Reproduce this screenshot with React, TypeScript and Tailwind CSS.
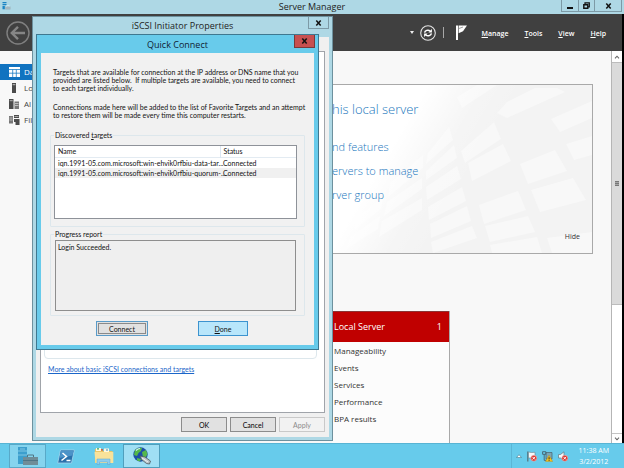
import type { ReactNode } from "react";

const SANS = "font-['Open_Sans','Noto_Sans',sans-serif]";
const DIALOG = "font-[Lato,'Liberation_Sans',sans-serif]";

/* ---------- icons ---------- */

function ServerLogo() {
  return (
    <svg viewBox="0 0 26 24" className="h-2 w-[9px]" aria-hidden="true">
      <path d="M1 0h12v4H1zM1 6h12v4H1zM1 12h7v10H1z" fill="#1b84c4" />
      <path d="M9 14h16v8H9z" fill="#8aa3ad" />
      <path d="M13 14v-3h8v3M9 18h16" fill="none" stroke="#f2f8fa" strokeWidth="1.5" />
    </svg>
  );
}

function BackIcon() {
  return (
    <svg viewBox="0 0 24 24" className="size-6" aria-hidden="true">
      <circle cx="12" cy="12" r="11" fill="none" stroke="#808080" strokeWidth="1.4" />
      <path d="M19 12H6.5M12 5.8 5.8 12l6.200 6.200" fill="none" stroke="#858585" strokeWidth="2.400" />
    </svg>
  );
}

function RefreshIcon() {
  return (
    <svg viewBox="0 0 16 16" className="size-4" aria-hidden="true">
      <circle cx="8" cy="8" r="7.300" fill="none" stroke="#e4e4e4" strokeWidth="1.100" />
      <path d="M4.600 7.600C5 5.500 8 4.300 10.200 6M11.400 8.400C11 10.500 8 11.700 5.800 10" fill="none" stroke="#fff" strokeWidth="1.500" />
      <path d="M11.900 4v3.600H8.400zM4.100 12V8.400h3.500z" fill="#fff" />
    </svg>
  );
}

function FlagIcon() {
  return (
    <svg viewBox="0 0 11 15" className="h-[15px] w-[11px]" aria-hidden="true">
      <path d="M0 .5h2V15H0z" fill="#fff" />
      <path d="M2.600 .5H11L7 6.200l-4.400 2z" fill="#fff" />
      <path d="M3 3.500l4-1.500" stroke="#777" strokeWidth=".7" />
    </svg>
  );
}

function DashboardIcon() {
  return (
    <svg viewBox="0 0 11 10" className="h-[10px] w-[11px]" aria-hidden="true">
      <path d="M0 0h11v10H0z" fill="#fff" />
      <path d="M0 2.500h11M3.700 2.500V10M7.300 2.500V10M0 6.200h11" stroke="#1a7cc4" strokeWidth=".8" />
    </svg>
  );
}

function LocalServerIcon() {
  return (
    <svg viewBox="0 0 11 10" className="h-[10px] w-[11px]" aria-hidden="true">
      <path d="M3 0h4v10H3z" fill="#4b4b4b" />
      <path d="M3.600 1.700h2.800" stroke="#ddd" strokeWidth=".8" />
    </svg>
  );
}

function AllServersIcon() {
  return (
    <svg viewBox="0 0 11 10" className="h-[10px] w-[11px]" aria-hidden="true">
      <path d="M0 0h4.500v10H0z" fill="#4b4b4b" />
      <path d="M5.500 2.500H10V10H5.500z" fill="#777" />
      <path d="M.7 1.700h3M6 4.500h3.500M6 6.500h3.500" stroke="#ddd" strokeWidth=".7" />
    </svg>
  );
}

function FileIcon() {
  return (
    <svg viewBox="0 0 11 10" className="h-[10px] w-[11px]" aria-hidden="true">
      <path d="M0 1h4v7.500H0z" fill="#777" />
      <path d="M5 0h5v3H5zM5 4h5.500v6H6.500V7H5z" fill="#4b4b4b" />
      <path d="M.5 3h3M.5 5h3M5.500 1.500h4" stroke="#e4e4e4" strokeWidth=".6" />
    </svg>
  );
}

function ServerTaskIcon() {
  return (
    <svg viewBox="0 0 22 20" className="h-5 w-[22px]" aria-hidden="true">
      <path d="M1 1h9v17H1z" fill="#3c9fcd" />
      <path d="M1 5h9M1 9h9M3 3h5" stroke="#7ec7e4" strokeWidth="1" />
      <path d="M6 11h15v8H6z" fill="#6f8d98" />
      <path d="M10.500 11V9h6v2M6 14.500h15" fill="none" stroke="#4f7484" strokeWidth="1" />
    </svg>
  );
}

function PowerShellIcon() {
  return (
    <svg viewBox="0 0 18 15" className="h-[15px] w-[18px]" aria-hidden="true">
      <path d="M3.500 1h13.800l-2.800 13H.7z" fill="#2a70ab" stroke="#a6d6ee" strokeWidth=".8" />
      <path d="M4 1.500h12.600l-1.100 5L2.500 9z" fill="#4c93c8" />
      <path d="M5.500 4l4 3.500-5 4M9.500 11.500h4" fill="none" stroke="#fff" strokeWidth="1.500" />
    </svg>
  );
}

function FolderIcon() {
  return (
    <svg viewBox="0 0 20 18" className="h-[18px] w-5" aria-hidden="true">
      <path d="M1 2h7l1 2h9.500v12H1z" fill="#e9c766" />
      <path d="M2 1h5v3H2zM10 1.500h5V5h-5z" fill="#fff8df" />
      <path d="M3 1.300h2v1.200H3z" fill="#3da35d" />
      <path d="M7 2.300h2v1.200H7z" fill="#d2452f" />
      <path d="M12 2.500h2v1h-2z" fill="#3b88c6" />
      <path d="M.5 5h18.800v11H1.500z" fill="#f8e29a" />
      <path d="M3 17.500v-5.500h13v5.500h-2.500V15h-8v2.500z" fill="#8fcdee" stroke="#5aa5d0" strokeWidth=".5" />
    </svg>
  );
}

function GlobeIcon() {
  return (
    <svg viewBox="0 0 20 18" className="h-[18px] w-5" aria-hidden="true">
      <circle cx="8.500" cy="7.500" r="7.200" fill="#1c4fa8" />
      <path d="M3 3c2-2 5-2.500 7-2L9 4 6.500 6 5 9 2 8zM10 5l4-2 1.500 4-2 4-2.500-1zM5 11l4 1-1 2.500-3-1z" fill="#55b84a" />
      <path d="M4 3.500c1.500-1.500 3-2 4-2" stroke="#cdeeff" strokeWidth="1.200" fill="none" />
      <path d="M8 9l5 1 5.500 4-1 3-3-.5-5-4z" fill="#b8c2c7" stroke="#4d5960" strokeWidth=".8" />
      <path d="M10 11l6 4" stroke="#f4f4f4" strokeWidth="1" />
    </svg>
  );
}

function ErrorBadge({ cx, cy }: { cx: number; cy: number }) {
  return (
    <g>
      <circle cx={cx} cy={cy} r="3" fill="#dc3a34" stroke="#f5c9c5" strokeWidth=".5" />
      <path d={`M${cx - 1.3} ${cy - 1.3}l2.600 2.600m0-2.600l-2.600 2.600`} stroke="#fff" strokeWidth=".9" />
    </g>
  );
}

function ActionCenterIcon() {
  return (
    <svg viewBox="0 0 10 11" className="h-[11px] w-[10px]" aria-hidden="true">
      <path d="M.8 .5v10" stroke="#54707b" strokeWidth="1.200" />
      <path d="M1.500 1l3 .5 3.500-.2V7H1.500z" fill="#f4f8fa" stroke="#67808b" strokeWidth=".6" />
      <ErrorBadge cx={6.8} cy={7.2} />
    </svg>
  );
}

function NetworkIcon() {
  return (
    <svg viewBox="0 0 11 11" className="size-[11px]" aria-hidden="true">
      <path d="M4 1.500h6V8H4z" fill="#7ba6b7" stroke="#46606b" strokeWidth=".7" />
      <path d="M.6 .7h3.200v2.600H.6zM2.200 3.300v6h3" fill="none" stroke="#46606b" strokeWidth=".9" />
      <path d="M7 4.200l3.800 6.300H3.500z" fill="#f5bf1f" stroke="#a67a00" strokeWidth=".3" />
      <path d="M7.100 6.200v2.200M7.100 9v.8" stroke="#222" strokeWidth=".9" />
    </svg>
  );
}

function VolumeIcon() {
  return (
    <svg viewBox="0 0 10 11" className="h-[11px] w-[10px]" aria-hidden="true">
      <path d="M.5 3.500h2L6 .8v9L2.500 7h-2z" fill="#f4f8fa" stroke="#5e7883" strokeWidth=".7" />
      <ErrorBadge cx={6.8} cy={7.2} />
    </svg>
  );
}

function CloseGlyph() {
  return (
    <svg viewBox="0 0 7 6" className="h-[6px] w-[7px]" aria-hidden="true">
      <path d="M1.300 .5l4.400 5M5.700 .5l-4.400 5" stroke="#111" strokeWidth="1.500" />
    </svg>
  );
}

function Facade() {
  return (
    <svg
      viewBox="0 0 260 168"
      preserveAspectRatio="xMaxYMax slice"
      className="absolute right-0 top-0 h-full w-[260px]"
      aria-hidden="true"
    >
      <defs>
        <linearGradient id="facade-fade" gradientUnits="userSpaceOnUse" x1="20" y1="20" x2="140" y2="90">
          <stop offset=".4" stopColor="#fff" />
          <stop offset=".75" stopColor="#fff" stopOpacity=".2" />
          <stop offset="1" stopColor="#fff" stopOpacity="0" />
        </linearGradient>
      </defs>
      <path d="M0 0h260v168H0z" fill="#f3f3f3" />
      <g fill="#f8f8f8" transform="translate(50 0)">
        <path d="M46 68 67 42l4 13-27 24z" />
        <path d="M44 86 72 60l3 13-31 22z" />
        <path d="M44 102l31-21 4 13-34 21z" />
        <path d="M46 122l34-20 4 14-37 19z" />
        <path d="M48 139l37-18 4 15-40 17z" />
        <path d="M49 157l41-16 5 12-44 15z" />
        <path d="M79 66l33-29 7 17-36 24z" />
        <path d="M86 78l35-19 8 17-39 20z" />
        <path d="M97 120l39-14 8 19-42 14z" />
        <path d="M103 141l43-10 7 16-45 10z" />
        <path d="M108 160l47-8 5 16h-50z" />
        <path d="M138 79l35-14 12 21-39 13z" />
        <path d="M149 105l42-12 13 22-46 12z" />
        <path d="M125 17l28-14h22l8 4-58 26-10-5z" />
        <path d="M169 34l41-18v17l-32 14z" />
        <path d="M184 59l26-8v19l-18 5z" />
        <path d="M75 12l20-12h20L80 23z" />
        <path d="M165 153l45-6v21h-40z" />
        <path d="M8 98 41 70v13L6 112z" />
        <path d="M5 117l35-24v11L2 131z" />
        <path d="M0 136l40-23v12L-3 152z" />
        <path d="M-26 133l28-22-3 13-27 21z" />
        <path d="M-32 152l30-21-2 13-32 20z" />
      </g>
      <path d="M0 0h260v168H0z" fill="url(#facade-fade)" />
    </svg>
  );
}

/* ---------- server manager ---------- */

function WindowButton({ label, className, children }: { label: string; className: string; children: ReactNode }) {
  return (
    <button
      type="button"
      aria-label={label}
      className={`flex h-3 items-center justify-center border border-t-0 border-[#7d9aa6] ${className}`}
    >
      {children}
    </button>
  );
}

function ManagerTitleBar() {
  return (
    <header className="relative flex h-[14px] shrink-0 items-start justify-between bg-[#aed8e5]">
      <div className="pt-[2px] pl-[2px]">
        <ServerLogo />
      </div>
      <h1 className="absolute inset-x-0 text-center text-[9px] leading-[14px] text-[#222]">Server Manager</h1>
      <div className="relative flex pr-[2px]">
        <WindowButton label="Minimize" className="w-[18px]">
          <span className="mt-1 h-[2px] w-[6px] bg-[#111]" />
        </WindowButton>
        <WindowButton label="Restore" className="w-4 border-l-0">
          <svg viewBox="0 0 7 7" className="size-[7px]" aria-hidden="true">
            <path d="M2 2V.8h4.300v4H5" fill="none" stroke="#111" strokeWidth="1.200" />
            <path d="M.8 2.800h4v3.400h-4z" fill="none" stroke="#111" strokeWidth="1.400" />
          </svg>
        </WindowButton>
        <WindowButton label="Close" className="w-[27px] border-l-0">
          <CloseGlyph />
        </WindowButton>
      </div>
    </header>
  );
}

const MENUS = ["Manage", "Tools", "View", "Help"];

function CommandBar() {
  return (
    <div className="flex h-[37px] shrink-0 items-center justify-between bg-[#404040] pr-4 pl-[6px] text-white">
      <button type="button" aria-label="Back">
        <BackIcon />
      </button>
      <div className="flex items-center">
        <button type="button" aria-label="Breadcrumb history" className="mr-[6px]">
          <svg viewBox="0 0 4 3" className="h-[3px] w-1" aria-hidden="true">
            <path d="M0 0h4L2 3z" fill="#eee" />
          </svg>
        </button>
        <button type="button" aria-label="Refresh">
          <RefreshIcon />
        </button>
        <span className="ml-[7px] h-[11px] w-px bg-[#a8a8a8]" />
        <button type="button" aria-label="Notifications" className="mr-[15px] ml-3">
          <FlagIcon />
        </button>
        <nav className="flex gap-4 pt-[2px] text-[7px] leading-[10px] font-semibold">
          {MENUS.map((menu) => (
            <button key={menu} type="button">
              <u>{menu[0]}</u>
              {menu.slice(1)}
            </button>
          ))}
        </nav>
      </div>
    </div>
  );
}

const SIDE_ITEMS = [
  { text: "Da", icon: <DashboardIcon />, active: true },
  { text: "Lo", icon: <LocalServerIcon />, active: false },
  { text: "Al", icon: <AllServersIcon />, active: false },
  { text: "Fil", icon: <FileIcon />, active: false },
];

function SideBar() {
  return (
    <nav className="w-9 shrink-0 bg-[#f8f8f8] pt-[13px]">
      {SIDE_ITEMS.map((item) => (
        <a
          key={item.text}
          href="#"
          className={`flex h-4 items-center gap-1 pl-[9px] text-[8px] leading-4 ${
            item.active ? "bg-[#1173c0] text-white" : "text-[#444]"
          }`}
        >
          <span className="shrink-0">{item.icon}</span>
          {item.text}
        </a>
      ))}
    </nav>
  );
}

const LINKS = ["nd features", "ervers to manage", "rver group"];
const TILE_ROWS = ["Manageability", "Events", "Services", "Performance", "BPA results"];

function Dashboard() {
  return (
    <main className="flex min-w-0 flex-1 flex-col bg-[#f8f8f8] pt-[33px] pr-[18px] pl-[296px]">
      <section className="relative h-[170px] shrink-0 border border-l-0 border-[#a9a9a9] bg-white">
        <Facade />
        <div className="relative flex h-full flex-col items-start text-[#2277bd]">
          <h2 className="mt-[14px] text-[13px] leading-5 font-light">his local server</h2>
          <ul className="mt-4 text-[11px] leading-6 font-light">
            {LINKS.map((link) => (
              <li key={link}>
                <a href="#">{link}</a>
              </li>
            ))}
          </ul>
          <button type="button" className="mt-auto mr-3 mb-[11px] self-end text-[7px] leading-[10px] text-[#333]">
            Hide
          </button>
        </div>
      </section>
      <section className="mt-[57px] flex w-[118px] flex-1 flex-col border-r border-[#a9a9a9] bg-[#fcfcfc]">
        <h3 className="flex h-[31px] items-center justify-between border-t border-[#8a3434] bg-[#c00000] pr-[7px] pl-[2px] text-[9px] text-white">
          <span>Local Server</span>
          <span>1</span>
        </h3>
        <ul className="pl-[2px] text-[8px] leading-[17px] text-[#333]">
          {TILE_ROWS.map((row) => (
            <li key={row}>{row}</li>
          ))}
        </ul>
      </section>
    </main>
  );
}

function ScrollBar() {
  return (
    <div className="flex w-[11px] shrink-0 flex-col border-l border-[#b5b5b5] bg-white">
      <button type="button" aria-label="Scroll up" className="flex h-[11px] items-center justify-center">
        <svg viewBox="0 0 6 4" className="h-1 w-[6px]" aria-hidden="true">
          <path d="M1 3.300 3 1.200l2 2.100" fill="none" stroke="#666" strokeWidth="1.100" />
        </svg>
      </button>
      <div className="flex flex-[242] items-center justify-center border-y border-[#bcbcbc] bg-[#dadada]">
        <span className="flex h-[5px] w-1 flex-col justify-between bg-[#a5a5a5]">
          <i className="h-px bg-[#777]" />
          <i className="h-px bg-[#777]" />
          <i className="h-px bg-[#777]" />
        </span>
      </div>
      <div className="flex-[129]" />
      <button
        type="button"
        aria-label="Scroll down"
        className="flex h-[10px] items-center justify-center border-t border-[#c4c4c4]"
      >
        <svg viewBox="0 0 6 4" className="h-1 w-[6px]" aria-hidden="true">
          <path d="M1 .7l2 2.100L5 .7" fill="none" stroke="#666" strokeWidth="1.100" />
        </svg>
      </button>
    </div>
  );
}

/* ---------- dialogs ---------- */

function Mnemonic({ text, at = 0 }: { text: string; at?: number }) {
  return (
    <span>
      {text.slice(0, at)}
      <u>{text[at]}</u>
      {text.slice(at + 1)}
    </span>
  );
}

function GroupBox({ legend, className, children }: { legend: ReactNode; className: string; children: ReactNode }) {
  return (
    <fieldset className={`mx-[9px] rounded-[1px] border border-[#dde7ec] px-[3px] ${className}`}>
      <legend className="px-px leading-[10px]">{legend}</legend>
      {children}
    </fieldset>
  );
}

const DIALOG_BUTTON = "flex h-[15px] items-center justify-center border leading-[10px]";

function PropertiesWindow() {
  return (
    <section
      aria-label="iSCSI Initiator Properties"
      className={`absolute top-4 left-8 flex h-[425px] w-[301px] flex-col border border-[#6d919e] bg-[#aed8e5] px-[3px] pb-[3px] text-[7px] ${DIALOG}`}
    >
      <header className="relative flex h-5 shrink-0 justify-end">
        <h2 className={`absolute inset-x-0 text-center text-[9px] leading-[17px] text-[#222] ${SANS}`}>
          iSCSI Initiator Properties
        </h2>
        <button
          type="button"
          aria-label="Close properties"
          className="relative flex h-3 w-[21px] items-center justify-center border border-t-0 border-[#7d9aa6]"
        >
          <CloseGlyph />
        </button>
      </header>
      <div className="flex flex-1 flex-col bg-[#f0f0f0] px-1 pt-[14px]">
        <div className="flex flex-1 flex-col border border-[#a0a4aa] bg-white px-[3px]">
          <div className="mr-1 h-[307px] rounded-sm border border-[#dde7ec]" />
          <a href="#" className="mt-[5px] self-start pl-1 leading-[10px] text-[#1b66c9] underline">
            More about basic iSCSI connections and targets
          </a>
        </div>
        <div className="flex justify-end gap-[3px] pt-1 pb-[5px]">
          <button type="button" className={`${DIALOG_BUTTON} w-[46px] border-[#8c8c8c] bg-[#e1e1e1]`}>
            OK
          </button>
          <button type="button" className={`${DIALOG_BUTTON} w-[46px] border-[#8c8c8c] bg-[#e1e1e1]`}>
            Cancel
          </button>
          <button type="button" disabled className={`${DIALOG_BUTTON} w-[46px] border-[#c9c9c9] bg-[#f2f2f2] text-[#8c8c8c]`}>
            Apply
          </button>
        </div>
      </div>
    </section>
  );
}

const TARGETS = [
  { name: "iqn.1991-05.com.microsoft:win-ehvik0rfbiu-data-tar...", status: "Connected", selected: false },
  { name: "iqn.1991-05.com.microsoft:win-ehvik0rfbiu-quorum-...", status: "Connected", selected: true },
];

function QuickConnectWindow() {
  return (
    <section
      role="dialog"
      aria-label="Quick Connect"
      className={`absolute top-[34px] left-9 flex h-[316px] w-[283px] flex-col border border-[#3f7890] bg-[#68cbeb] px-1 pb-1 text-[7px] text-[#111] ${DIALOG}`}
    >
      <header className="relative flex h-[18px] shrink-0 justify-end">
        <h2 className={`absolute inset-x-0 text-center text-[9px] leading-[19px] text-[#123] ${SANS}`}>Quick Connect</h2>
        <button
          type="button"
          aria-label="Close quick connect"
          className="relative -mr-[1px] flex h-[13px] w-[21px] items-center justify-center border border-t-0 border-[#7a3a3a] bg-[#c75050]"
        >
          <CloseGlyph />
        </button>
      </header>
      <div className="flex-1 bg-[#f1f1f1] pt-[15px]">
        <p className="px-3 leading-[8px] whitespace-nowrap">
          Targets that are available for connection at the IP address or DNS name that you
          <br />
          provided are listed below.&nbsp; If multiple targets are available, you need to connect
          <br />
          to each target individually.
        </p>
        <p className="mt-[11px] px-3 leading-[8px] whitespace-nowrap">
          Connections made here will be added to the list of Favorite Targets and an attempt
          <br />
          to restore them will be made every time this computer restarts.
        </p>
        <GroupBox legend={<Mnemonic text="Discovered targets" at={11} />} className="mt-[11px] h-[97px]">
          <div className="mt-[5px] h-[74px] w-[243px] border border-[#8e9299] bg-white">
            <table className="w-full table-fixed border-collapse">
              <thead>
                <tr className="h-[11px] border-b border-[#e3ebf2] text-left leading-[10px]">
                  <th className="w-[165px] border-r border-[#dbe7f3] pl-[3px] font-normal">Name</th>
                  <th className="pl-[3px] font-normal">Status</th>
                </tr>
              </thead>
              <tbody>
                {TARGETS.map((target) => (
                  <tr key={target.name} className={`h-[10px] leading-[10px] ${target.selected ? "bg-[#f0f0f0]" : ""}`}>
                    <td className="pl-[3px] whitespace-nowrap">{target.name}</td>
                    <td className="pl-[3px]">{target.status}</td>
                  </tr>
                ))}
              </tbody>
            </table>
          </div>
        </GroupBox>
        <GroupBox legend={<label htmlFor="progress">Progress report</label>} className="mt-[2px] h-[87px]">
          <textarea
            id="progress"
            readOnly
            defaultValue="Login Succeeded."
            className="mt-px ml-px block h-[71px] w-[241px] resize-none border border-[#8e8e8e] bg-[#efefef] px-[2px] py-px leading-[10px] outline-none"
          />
        </GroupBox>
        <div className="mt-[5px] flex gap-[50px] pl-[55px]">
          <button
            type="button"
            className={`${DIALOG_BUTTON} w-[52px] border-[#5a9bc8] bg-[#e1e1e1] outline outline-1 -outline-offset-3 outline-[#8a8a8a]`}
          >
            <Mnemonic text="Connect" />
          </button>
          <button type="button" className={`${DIALOG_BUTTON} w-[50px] border-[#3c93cf] bg-[#b8e6fb]`}>
            <Mnemonic text="Done" />
          </button>
        </div>
      </div>
    </section>
  );
}

/* ---------- taskbar ---------- */

const TASK_BUTTON = "flex h-full w-[37px] items-center justify-center";

function TaskBar() {
  return (
    <footer className="flex h-[25px] shrink-0 items-stretch justify-between border-t border-[#58b4d4] bg-[#67cbeb]">
      <div className="flex pl-[9px]">
        <button type="button" aria-label="Server Manager" className={`${TASK_BUTTON} border border-[#58a9c8] bg-[#85d4ee]`}>
          <ServerTaskIcon />
        </button>
        <button type="button" aria-label="PowerShell" className={`${TASK_BUTTON} ml-px`}>
          <PowerShellIcon />
        </button>
        <button type="button" aria-label="File Explorer" className={`${TASK_BUTTON} ml-px`}>
          <FolderIcon />
        </button>
        <button type="button" aria-label="iSCSI Initiator" className={`${TASK_BUTTON} ml-px border border-[#4f9fbd] bg-[#a0dff4]`}>
          <GlobeIcon />
        </button>
      </div>
      <div className="flex items-center gap-[5px] border-l border-[#5bb6d6] pr-[15px] pl-[4px]">
        <button type="button" aria-label="Show hidden icons">
          <svg viewBox="0 0 6 4" className="h-1 w-[6px]" aria-hidden="true">
            <path d="M.5 3.500 3 .7l2.500 2.800z" fill="#fff" stroke="#4a7a8c" strokeWidth=".6" />
          </svg>
        </button>
        <ActionCenterIcon />
        <NetworkIcon />
        <VolumeIcon />
        <time className="ml-[6px] text-center text-[7px] leading-[11px] text-white">
          11:38 AM
          <br />
          3/2/2012
        </time>
      </div>
    </footer>
  );
}

export default function App() {
  return (
    <div className={`relative flex h-screen w-full flex-col overflow-hidden ${SANS}`}>
      <ManagerTitleBar />
      <div className="flex min-h-0 flex-1 flex-col bg-black pr-[2px]">
        <CommandBar />
        <div className="flex min-h-0 flex-1">
          <SideBar />
          <Dashboard />
          <ScrollBar />
        </div>
      </div>
      <TaskBar />
      <PropertiesWindow />
      <QuickConnectWindow />
    </div>
  );
}
